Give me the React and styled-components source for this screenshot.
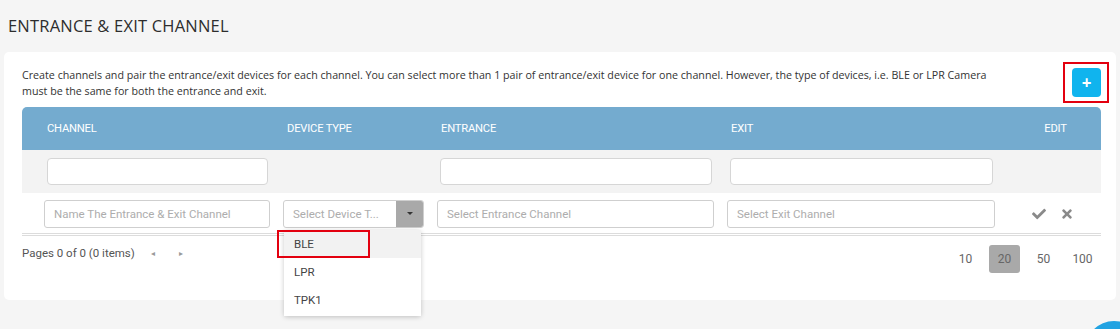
import React from "react";
import styled, { createGlobalStyle } from "styled-components";
import { FaCheck, FaTimes } from "react-icons/fa";

const GlobalStyle = createGlobalStyle`
  body {
    margin: 0;
    background: #f5f5f5;
    font-family: "Open Sans", sans-serif;
    overflow: hidden;
  }
`;

function App() {
  return (
    <Page>
      <GlobalStyle />
      <Title>ENTRANCE &amp; EXIT CHANNEL</Title>
      <Card>
        <TopRow>
          <Description>
            Create channels and pair the entrance/exit devices for each channel. You can select more than 1 pair of
            entrance/exit device for one channel. However, the type of devices, i.e. BLE or LPR Camera must be the same
            for both the entrance and exit.
          </Description>
          <AddWrap>
            <AddButton>+</AddButton>
            <Highlight $inset="-6px -8px -6px -9px" />
          </AddWrap>
        </TopRow>

        <Table>
          <HeaderRow>
            <HeadCell $first>CHANNEL</HeadCell>
            <HeadCell>DEVICE TYPE</HeadCell>
            <HeadCell>ENTRANCE</HeadCell>
            <HeadCell>EXIT</HeadCell>
            <HeadCell $center>EDIT</HeadCell>
          </HeaderRow>

          <FilterRow>
            <Cell $first>
              <FilterInput />
            </Cell>
            <Cell />
            <Cell>
              <FilterInput />
            </Cell>
            <Cell>
              <FilterInput />
            </Cell>
            <Cell />
          </FilterRow>

          <DataRow>
            <Cell $first>
              <EditInput placeholder="Name The Entrance & Exit Channel" />
            </Cell>
            <Cell>
              <SelectWrap>
                <SelectBox>
                  <SelectText>Select Device T...</SelectText>
                  <SelectArrow>
                    <Caret />
                  </SelectArrow>
                </SelectBox>
                <Dropdown>
                  <Option $active>
                    BLE
                    <Highlight $inset="0 51px 0 -7px" />
                  </Option>
                  <Option>LPR</Option>
                  <Option>TPK1</Option>
                </Dropdown>
              </SelectWrap>
            </Cell>
            <Cell>
              <EditInput placeholder="Select Entrance Channel" />
            </Cell>
            <Cell>
              <EditInput placeholder="Select Exit Channel" />
            </Cell>
            <Actions>
              <FaCheck size={14} />
              <FaTimes size={14} />
            </Actions>
          </DataRow>

          <Pager>
            <PagerInfo>
              Pages 0 of 0 (0 items)
              <PagerArrow $gap="16px">&#9666;</PagerArrow>
              <PagerArrow $gap="24px">&#9656;</PagerArrow>
            </PagerInfo>
            <PageSizes>
              {[10, 20, 50, 100].map((n) => (
                <PageSize key={n} $active={n === 20}>
                  {n}
                </PageSize>
              ))}
            </PageSizes>
          </Pager>
        </Table>
      </Card>
      <FloatButton />
    </Page>
  );
}

const Page = styled.div`
  padding: 0 4px;
  height: 329px;
  box-sizing: border-box;
`;

const Title = styled.h1`
  margin: 0;
  padding: 14px 4px 0;
  height: 52px;
  box-sizing: border-box;
  font-family: "Open Sans", sans-serif;
  font-size: 16.5px;
  font-weight: 500;
  color: #2d2d2d;
  letter-spacing: 0.2px;
`;

const Card = styled.div`
  background: #fff;
  border-radius: 5px;
  padding: 12px 15px 29px 18px;
  height: 248px;
  box-sizing: border-box;
`;

const TopRow = styled.div`
  display: flex;
  justify-content: space-between;
  align-items: flex-start;
  margin-bottom: 8px;
`;

const Description = styled.p`
  margin: 3px 0 0;
  width: 990px;
  font-family: "Open Sans", sans-serif;
  font-size: 10.7px;
  line-height: 16px;
  color: #333;
`;

const AddWrap = styled.div`
  position: relative;
  margin-top: 4px;
`;

const AddButton = styled.button`
  display: block;
  width: 29px;
  height: 29px;
  border: none;
  border-radius: 4px;
  background: #10b4ee;
  color: #fff;
  font-family: "Open Sans", sans-serif;
  font-size: 17px;
  font-weight: 700;
  line-height: 29px;
  padding: 0;
`;

const Highlight = styled.span`
  position: absolute;
  inset: ${(p) => p.$inset};
  border: 2px solid #e3000f;
  pointer-events: none;
`;

const Table = styled.div`
  width: 1079px;
  font-family: Roboto, sans-serif;
`;

const columns = `
  display: grid;
  grid-template-columns: 256px 154px 290px 281px 1fr;
  align-items: center;
`;

const HeaderRow = styled.div`
  ${columns};
  height: 43px;
  background: #74abcf;
  border-radius: 5px 5px 0 0;
`;

const HeadCell = styled.div`
  padding-left: ${(p) => (p.$first ? "25px" : "9px")};
  padding-right: ${(p) => (p.$center ? "2px" : "0")};
  text-align: ${(p) => (p.$center ? "center" : "left")};
  color: #fff;
  font-size: 11.2px;
  letter-spacing: -0.2px;
`;

const FilterRow = styled.div`
  ${columns};
  height: 43px;
  background: #f3f3f3;
`;

const DataRow = styled.div`
  ${columns};
  height: 39px;
  padding-top: 1px;
  border-bottom: 3px double #dcdcdc;
`;

const Cell = styled.div`
  padding: 0 10px 0 ${(p) => (p.$first ? "25px" : "8px")};
`;

const FilterInput = styled.input`
  display: block;
  width: 100%;
  height: 27px;
  box-sizing: border-box;
  border: 1px solid #d6d6d6;
  border-radius: 4px;
  background: #fff;
  outline: none;
`;

const EditInput = styled.input`
  display: block;
  width: calc(100% + 5px);
  margin-left: -3px;
  height: 28px;
  box-sizing: border-box;
  border: 1px solid #cfcfcf;
  border-radius: 3px;
  padding: 0 9px;
  font-family: Roboto, sans-serif;
  font-size: 11.5px;
  outline: none;
  &::placeholder {
    color: #adadad;
  }
`;

const SelectWrap = styled.div`
  position: relative;
  margin-left: -3px;
  width: calc(100% + 5px);
`;

const SelectBox = styled.div`
  display: flex;
  height: 28px;
  box-sizing: border-box;
  border: 1px solid #cfcfcf;
  border-radius: 3px;
  overflow: hidden;
`;

const SelectText = styled.span`
  flex: 1;
  padding-left: 9px;
  line-height: 26px;
  font-size: 11.5px;
  color: #adadad;
  white-space: nowrap;
`;

const SelectArrow = styled.span`
  width: 27px;
  display: flex;
  align-items: center;
  justify-content: center;
  background: #a9a9a9;
`;

const Caret = styled.span`
  width: 0;
  height: 0;
  border-left: 3px solid transparent;
  border-right: 3px solid transparent;
  border-top: 3px solid #333;
`;

const Dropdown = styled.div`
  position: absolute;
  top: 30px;
  left: 1px;
  width: 137px;
  background: #fff;
  border-radius: 3px;
  box-shadow: 0 1px 5px rgba(0, 0, 0, 0.22);
  z-index: 2;
`;

const Option = styled.div`
  position: relative;
  height: 28px;
  line-height: 28px;
  padding-left: 10px;
  font-size: 11.5px;
  color: #444;
  background: ${(p) => (p.$active ? "#f2f2f2" : "#fff")};
  &:last-child {
    height: 30px;
  }
`;

const Actions = styled.div`
  display: flex;
  gap: 14px;
  padding-left: 29px;
  color: #8a8a8a;
`;

const Pager = styled.div`
  display: flex;
  justify-content: space-between;
  align-items: flex-start;
  padding-top: 9px;
`;

const PagerInfo = styled.div`
  display: flex;
  align-items: center;
  height: 16px;
  font-size: 11.5px;
  color: #555;
`;

const PagerArrow = styled.span`
  margin-left: ${(p) => p.$gap};
  font-size: 8px;
  color: #9a9a9a;
`;

const PageSizes = styled.div`
  display: flex;
  gap: 8px;
  padding-right: 3px;
`;

const PageSize = styled.span`
  width: 31px;
  height: 28px;
  display: flex;
  align-items: center;
  justify-content: center;
  font-size: 12px;
  color: #666;
  border-radius: 3px;
  background: ${(p) => (p.$active ? "#a9a9a9" : "transparent")};
`;

const FloatButton = styled.span`
  position: fixed;
  left: 1085px;
  top: 321px;
  width: 58px;
  height: 58px;
  border-radius: 50%;
  background: #21a3e2;
`;

export default App;
